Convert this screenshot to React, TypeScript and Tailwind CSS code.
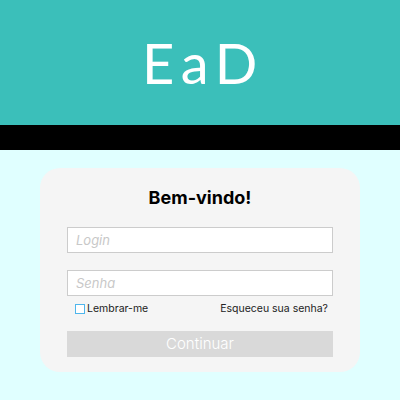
import React, { useState } from "react";

const App = () => {
  const [remember, setRemember] = useState(false);

  return (
    <div className="w-[400px] h-[400px] bg-[#e0ffff] font-[family-name:Inter,sans-serif] overflow-hidden">
      <header className="h-[125px] bg-[#3bbfba] flex items-center justify-center">
        <h1 className="text-white text-[56px] font-normal tracking-[0.12em] pl-[6px] font-[family-name:Lato,sans-serif] leading-none">
          EaD
        </h1>
      </header>
      <div className="h-[25px] bg-black" />

      <div className="px-10 pt-[18px]">
        <form
          className="bg-[#f5f5f5] rounded-[20px] h-[204px] flex flex-col items-center pt-[18px] px-[27px]"
          onSubmit={(e) => e.preventDefault()}
        >
          <h2 className="text-[18px] font-bold text-black leading-[24px]">Bem-vindo!</h2>

          <input
            className="mt-[17px] w-full h-[26px] bg-white border border-[#cccccc] px-2 text-[13px] italic placeholder:text-[#c8c8c8] outline-none"
            placeholder="Login"
          />
          <input
            type="password"
            className="mt-[17px] w-full h-[26px] bg-white border border-[#cccccc] px-2 text-[13px] italic placeholder:text-[#c8c8c8] outline-none"
            placeholder="Senha"
          />

          <div className="w-full flex items-center justify-between mt-[6px] pl-2 pr-[5px] text-[10.5px] text-[#222] leading-[14px]">
            <label className="flex items-center gap-[2px] cursor-pointer">
              <span
                onClick={() => setRemember(!remember)}
                className="w-[10px] h-[10px] border border-[#4fb6ec] bg-white inline-block"
              />
              Lembrar-me
            </label>
            <a className="cursor-pointer">Esqueceu sua senha?</a>
          </div>

          <button
            type="submit"
            className="mt-[15px] w-full h-[26px] bg-[#d9d9d9] text-white text-[15px] font-light"
          >
            Continuar
          </button>
        </form>
      </div>
    </div>
  );
};

export default App;
